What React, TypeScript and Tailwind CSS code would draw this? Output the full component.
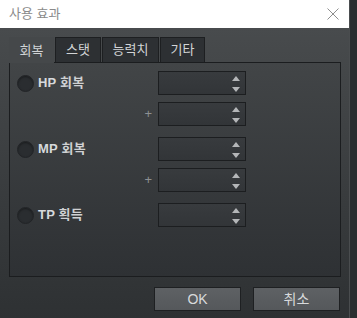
import React from 'react';

const font = { fontFamily: '"Liberation Sans", "Noto Sans CJK KR", sans-serif' };

const SpinBox: React.FC = () => (
  <div className="w-[88px] h-[24px] border border-[#1c1e20] bg-gradient-to-b from-[#383b3e] to-[#323538] relative">
    <div className="absolute right-[5px] top-[4px] flex flex-col items-center gap-[6px]">
      <svg width="8" height="5" viewBox="0 0 8 5"><path d="M4 0 L8 5 L0 5 Z" fill="#b4b6b8" /></svg>
      <svg width="8" height="5" viewBox="0 0 8 5"><path d="M0 0 L8 0 L4 5 Z" fill="#b4b6b8" /></svg>
    </div>
  </div>
);

const Radio: React.FC<{ label: string; sub: string }> = ({ label, sub }) => (
  <div className="flex items-center gap-[4px]">
    <div className="w-[17px] h-[17px] rounded-full bg-[#2a2d30] border border-[#222427] shadow-[inset_0_1px_2px_rgba(0,0,0,0.4)]" />
    <span className="text-[13px] font-bold text-[#d6d9dc] tracking-[0.2px]">
      {label} <span className="text-[#cfd1d3]">{sub}</span>
    </span>
  </div>
);

const Plus: React.FC = () => (
  <span className="w-[148px] flex justify-end pr-[6px] text-[13px] text-[#8d9093]">+</span>
);

export default function App() {
  const tabs = ['회복', '스탯', '능력치', '기타'];
  const tabWidths = ['w-[45px]', 'w-[46px]', 'w-[57px]', 'w-[45px]'];

  return (
    <div className="w-[357px] h-[318px] flex bg-[#2c2f31]" style={font}>
      <div className="w-[349px] h-full flex flex-col">
        {/* title bar */}
        <div className="h-[28px] bg-white flex items-center justify-between pl-[9px] pr-[10px]">
          <span className="text-[13px] text-[#8a8a8a]">사용 효과</span>
          <svg width="12" height="12" viewBox="0 0 12 12">
            <path d="M0.5 0.5 L11.5 11.5 M11.5 0.5 L0.5 11.5" stroke="#8e8e8e" strokeWidth="1" />
          </svg>
        </div>

        {/* body */}
        <div className="flex-1 bg-gradient-to-b from-[#484b4d] to-[#2e3133] pt-[9px] pl-[9px] flex flex-col">
          <div className="flex h-[25px] items-end">
            {tabs.map((t, i) => (
              <div
                key={t}
                className={`${tabWidths[i]} h-[25px] flex items-center justify-center text-[13px] text-[#d2d4d6] border-t border-l border-r ${
                  i === 0
                    ? 'bg-[#45484a] border-[#45484a] relative z-10 h-[26px] -mb-[1px]'
                    : 'bg-[#2d3033] border-[#1d1f21] ml-[1px]'
                }`}
              >
                {t}
              </div>
            ))}
          </div>

          <div className="w-[332px] h-[215px] border border-[#1b1d1f] bg-gradient-to-b from-[#424547] to-[#2e3134] pt-[8px] flex flex-col">
            <div className="flex items-center">
              <div className="w-[148px] pl-[7px]"><Radio label="HP" sub="회복" /></div>
              <SpinBox />
            </div>
            <div className="flex items-center mt-[7px]">
              <Plus />
              <SpinBox />
            </div>
            <div className="flex items-center mt-[11px]">
              <div className="w-[148px] pl-[7px]"><Radio label="MP" sub="회복" /></div>
              <SpinBox />
            </div>
            <div className="flex items-center mt-[7px]">
              <Plus />
              <SpinBox />
            </div>
            <div className="flex items-center mt-[11px]">
              <div className="w-[148px] pl-[7px]"><Radio label="TP" sub="획득" /></div>
              <SpinBox />
            </div>
          </div>

          <div className="flex justify-end gap-[12px] pr-[9px] mt-[10px]">
            {['OK', '취소'].map(b => (
              <button
                key={b}
                className="w-[87px] h-[24px] bg-gradient-to-b from-[#5e6164] to-[#55585b] border border-[#1e2022] text-[14px] text-[#d8dadc] flex items-center justify-center"
              >
                {b}
              </button>
            ))}
          </div>
        </div>
      </div>
      <div className="w-[1px] h-full bg-[#4a4d4f]" />
      <div className="flex-1 h-full bg-[#2b2e30]" />
    </div>
  );
}
